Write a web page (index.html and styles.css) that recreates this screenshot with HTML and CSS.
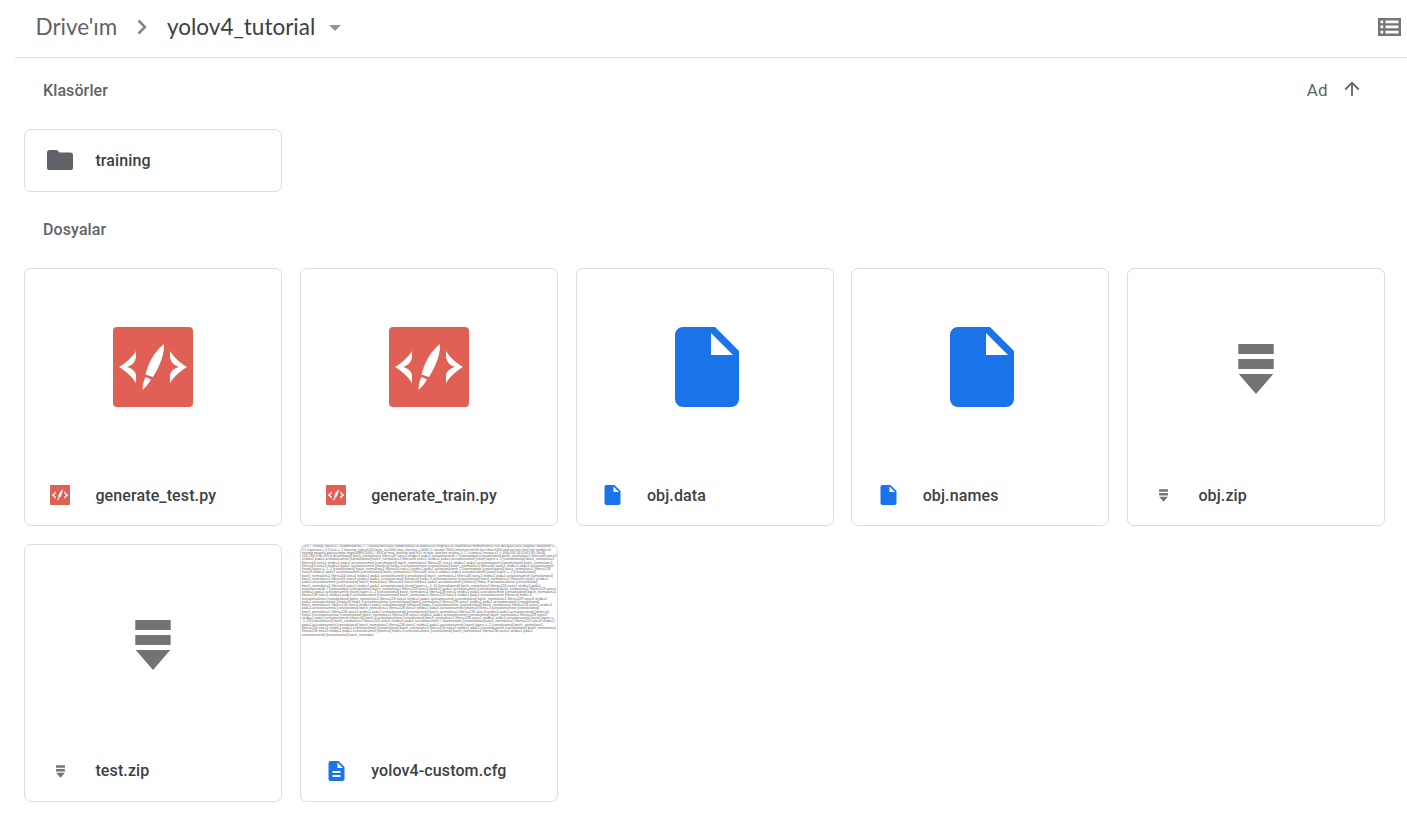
FILE: index.html
```html
<!DOCTYPE html>
<html lang="tr">
<head>
<meta charset="utf-8">
<title>yolov4_tutorial</title>
<link rel="stylesheet" href="styles.css">
</head>
<body>
<svg class="sprite" aria-hidden="true">
  <symbol id="code" viewBox="0 0 80 80">
    <rect width="80" height="80" rx="4" fill="#e06055"/>
    <path fill="#fff" d="M23 24v6c-1 6-4 8-9 10 5 1.500 8 3.500 9 8v8C19 49 11 43 6 40 11 37 19 31 23 24zM57 24v6c1 6 4 8 9 10-5 1.500-8 3.500-9 8v8c4-7 12-13 17-16-5-3-13-9-17-16zM51 17c.5 9-3 20-11 33l-7.500-2.500C35.500 35 42 24 51 17zM32.500 50l5.500 2.500c-2 4-5 7-8.500 10.500 0-5 1-9 3-13z"/>
  </symbol>
  <symbol id="file" viewBox="0 0 64 80">
    <path fill="#1a73e8" fill-rule="evenodd" d="M8 0h32l24 24v48a8 8 0 0 1-8 8H8a8 8 0 0 1-8-8V8a8 8 0 0 1 8-8zM36 6v22h22z"/>
  </symbol>
  <symbol id="doc" viewBox="0 0 64 80">
    <path fill="#1a73e8" fill-rule="evenodd" d="M8 0h32l24 24v48a8 8 0 0 1-8 8H8a8 8 0 0 1-8-8V8a8 8 0 0 1 8-8zM36 6v22h22zM16 40v8h32v-8zM16 56v8h32v-8z"/>
  </symbol>
  <symbol id="zip" viewBox="0 0 36 50">
    <path fill="#737373" d="M.3 0h35.400v10H.3zM.3 15h35.400v10H.3zM.7 30h34.600L18 50z"/>
  </symbol>
</svg>

<header class="topbar">
  <nav class="crumbs">
    <span class="crumb crumb-root">Drive'ım</span>
    <svg class="chevron" viewBox="0 0 10 16"><path d="M1.500 1.500 8 8l-6.500 6.500"/></svg>
    <span class="crumb crumb-current">yolov4_tutorial</span>
    <svg class="caret" viewBox="0 0 12 6"><path d="M0 0h12L6 6z"/></svg>
  </nav>
  <svg class="list-icon" viewBox="0 0 23 18"><path fill-rule="evenodd" d="M0 0h23v18H0zM2.500 2.500v2.700h2.700V2.500zM7.500 2.500v2.700h13V2.500zM2.500 7.600v2.700h2.700V7.600zM7.500 7.600v2.700h13V7.600zM2.500 12.800v2.700h2.700v-2.700zM7.500 12.800v2.700h13v-2.700z"/></svg>
</header>

<main class="content">
  <div class="section-head">
    <h2 class="section-title">Klasörler</h2>
    <div class="sort"><span>Ad</span><svg class="arrow" viewBox="0 0 16 16"><path d="M8 15V2M1.200 8.500 8 1.700l6.800 6.800"/></svg></div>
  </div>
  <div class="grid">
    <div class="card folder">
      <div class="meta"><span class="icon-slot"><svg class="folder-icon" viewBox="0 0 26 20"><path d="M2.600 0H10l2.600 2.500h10.800A2.600 2.600 0 0 1 26 5.100v12.300a2.600 2.600 0 0 1-2.600 2.600H2.600A2.600 2.600 0 0 1 0 17.400V2.600A2.600 2.600 0 0 1 2.600 0z"/></svg></span><span class="name">training</span></div>
    </div>
  </div>

  <h2 class="section-title files-title">Dosyalar</h2>
  <div class="grid">
    <div class="card file">
      <div class="thumb"><svg class="big-code"><use href="#code"/></svg></div>
      <div class="meta"><span class="icon-slot"><svg class="small-code"><use href="#code"/></svg></span><span class="name">generate_test.py</span></div>
    </div>
    <div class="card file">
      <div class="thumb"><svg class="big-code"><use href="#code"/></svg></div>
      <div class="meta"><span class="icon-slot"><svg class="small-code"><use href="#code"/></svg></span><span class="name">generate_train.py</span></div>
    </div>
    <div class="card file">
      <div class="thumb"><svg class="big-file"><use href="#file"/></svg></div>
      <div class="meta"><span class="icon-slot"><svg class="small-file"><use href="#file"/></svg></span><span class="name">obj.data</span></div>
    </div>
    <div class="card file">
      <div class="thumb"><svg class="big-file"><use href="#file"/></svg></div>
      <div class="meta"><span class="icon-slot"><svg class="small-file"><use href="#file"/></svg></span><span class="name">obj.names</span></div>
    </div>
    <div class="card file">
      <div class="thumb"><svg class="big-zip"><use href="#zip"/></svg></div>
      <div class="meta"><span class="icon-slot"><svg class="small-zip"><use href="#zip"/></svg></span><span class="name">obj.zip</span></div>
    </div>
    <div class="card file">
      <div class="thumb"><svg class="big-zip"><use href="#zip"/></svg></div>
      <div class="meta"><span class="icon-slot"><svg class="small-zip"><use href="#zip"/></svg></span><span class="name">test.zip</span></div>
    </div>
    <div class="card file">
      <div class="thumb text-thumb"><p class="preview">[net] # Testing #batch=1 #subdivisions=1 # Training batch=64 subdivisions=16 width=416 height=416 channels=3 momentum=0.949 decay=0.0005 angle=0 saturation = 1.5 exposure = 1.5 hue = .1 learning_rate=0.001 burn_in=1000 max_batches = 6000 (# classes*2000 and must not be less than 6000 and not less than the number of training images) policy=steps steps=4800,5400 # 80% of max_batches and 90% of max_batches scales=.1,.1 #cutmix=1 mosaic=1 #:104x104 54:52x52 85:26x26 104:13x13 for 416 [convolutional] batch_normalize=1 filters=32 size=3 stride=1 pad=1 activation=mish # Downsample [convolutional] batch_normalize=1 filters=64 size=3 stride=2 pad=1 activation=mish [convolutional] batch_normalize=1 filters=64 size=1 stride=1 pad=1 activation=mish [route] layers = -2 [convolutional] batch_normalize=1 filters=64 size=1 stride=1 pad=1 activation=mish [convolutional] batch_normalize=1 filters=32 size=1 stride=1 pad=1 activation=mish [convolutional] batch_normalize=1 filters=64 size=3 stride=1 pad=1 activation=mish [shortcut] from=-3 activation=linear [convolutional] batch_normalize=1 filters=64 size=1 stride=1 pad=1 activation=mish [route] layers = -1,-7 [convolutional] batch_normalize=1 filters=64 size=1 stride=1 pad=1 activation=mish # Downsample [convolutional] batch_normalize=1 filters=128 size=3 stride=2 pad=1 activation=mish [convolutional] batch_normalize=1 filters=64 size=1 stride=1 pad=1 activation=mish [route] layers = -2 [convolutional] batch_normalize=1 filters=64 size=1 stride=1 pad=1 activation=mish [convolutional] batch_normalize=1 filters=64 size=1 stride=1 pad=1 activation=mish [convolutional] batch_normalize=1 filters=64 size=3 stride=1 pad=1 activation=mish [shortcut] from=-3 activation=linear [convolutional] batch_normalize=1 filters=64 size=1 stride=1 pad=1 activation=mish [convolutional] batch_normalize=1 filters=64 size=3 stride=1 pad=1 activation=mish [shortcut] from=-3 activation=linear [convolutional] batch_normalize=1 filters=64 size=1 stride=1 pad=1 activation=mish [route] layers = -1,-10 [convolutional] batch_normalize=1 filters=128 size=1 stride=1 pad=1 activation=mish # Downsample [convolutional] batch_normalize=1 filters=256 size=3 stride=2 pad=1 activation=mish [convolutional] batch_normalize=1 filters=128 size=1 stride=1 pad=1 activation=mish [route] layers = -2 [convolutional] batch_normalize=1 filters=128 size=1 stride=1 pad=1 activation=mish [convolutional] batch_normalize=1 filters=128 size=1 stride=1 pad=1 activation=mish [convolutional] batch_normalize=1 filters=128 size=3 stride=1 pad=1 activation=mish [shortcut] from=-3 activation=linear [convolutional] batch_normalize=1 filters=128 size=1 stride=1 pad=1 activation=mish [convolutional] batch_normalize=1 filters=128 size=3 stride=1 pad=1 activation=mish [shortcut] from=-3 activation=linear [convolutional] batch_normalize=1 filters=128 size=1 stride=1 pad=1 activation=mish [convolutional] batch_normalize=1 filters=128 size=3 stride=1 pad=1 activation=mish [shortcut] from=-3 activation=linear [convolutional] batch_normalize=1 filters=128 size=1 stride=1 pad=1 activation=mish [convolutional] batch_normalize=1 filters=128 size=3 stride=1 pad=1 activation=mish [shortcut] from=-3 activation=linear [convolutional] batch_normalize=1 filters=128 size=1 stride=1 pad=1 activation=mish [convolutional] batch_normalize=1 filters=128 size=3 stride=1 pad=1 activation=mish [shortcut] from=-3 activation=linear [convolutional] batch_normalize=1 filters=128 size=1 stride=1 pad=1 activation=mish [convolutional] batch_normalize=1 filters=128 size=3 stride=1 pad=1 activation=mish [shortcut] from=-3 activation=linear [convolutional] batch_normalize=1 filters=128 size=1 stride=1 pad=1 activation=mish [route] layers = -1,-28 [convolutional] batch_normalize=1 filters=256 size=1 stride=1 pad=1 activation=mish # Downsample [convolutional] batch_normalize=1 filters=512 size=3 stride=2 pad=1 activation=mish [convolutional] batch_normalize=1 filters=256 size=1 stride=1 pad=1 activation=mish [route] layers = -2 [convolutional] batch_normalize=1 filters=256 size=1 stride=1 pad=1 activation=mish [convolutional] batch_normalize=1 filters=256 size=1 stride=1 pad=1 activation=mish [convolutional] batch_normalize=1 filters=256 size=3 stride=1 pad=1 activation=mish [shortcut] from=-3 activation=linear [convolutional] batch_normalize=1 filters=256 size=1 stride=1 pad=1 activation=mish [convolutional] batch_normalize</p></div>
      <div class="meta"><span class="icon-slot"><svg class="small-file"><use href="#doc"/></svg></span><span class="name">yolov4-custom.cfg</span></div>
    </div>
  </div>
</main>
</body>
</html>
```

FILE: styles.css
```css
* { box-sizing: border-box; }
body { margin: 0; background: #fff; color: #3c4043; font-family: Roboto, "Liberation Sans", sans-serif; }
svg { display: block; flex: none; }
.sprite { display: none; }
.topbar { height: 58px; margin-left: 15px; padding: 0 6.5px 3px 20px; border-bottom: 1px solid #dadce0; display: flex; align-items: center; justify-content: space-between; }
.crumbs { display: flex; align-items: center; font: 400 22.5px/30px Lato, sans-serif; }
.crumb { white-space: nowrap; }
.crumb-root { width: 82px; padding-left: .5px; color: #5f6368; }
.crumb-current { width: 149px; margin-left: 20px; color: #3c4043; }
.chevron { width: 10px; height: 16px; margin-left: 20px; fill: none; stroke: #80868b; stroke-width: 2.5; }
.caret { width: 12px; height: 6px; margin: 2px 0 0 13px; fill: #949494; }
.list-icon { width: 23px; height: 18px; fill: #757575; }
.content { padding: 0 22px 0 24px; }
.section-head { height: 71px; padding: 0 25.5px 7px 19px; display: flex; align-items: center; justify-content: space-between; }
.section-title { margin: 0; font-size: 16px; line-height: 20px; font-weight: 500; letter-spacing: .1px; color: #5f6368; }
.section-head .section-title { padding-top: 2px; }
.sort { display: flex; align-items: center; gap: 16px; font-size: 17px; line-height: 20px; color: #5f6368; }
.arrow { width: 16px; height: 16px; margin-bottom: 2px; fill: none; stroke: #5f6368; stroke-width: 1.8; }
.grid { display: grid; grid-template-columns: repeat(5, 258px); justify-content: space-between; row-gap: 17.75px; }
.card { border: 1px solid #dadce0; border-radius: 7px; overflow: hidden; }
.folder { height: 63px; display: flex; align-items: center; }
.file { height: 258px; display: flex; flex-direction: column; }
.files-title { padding: 28px 0 28px 19px; }
.thumb { height: 196px; display: flex; align-items: center; justify-content: center; }
.meta { height: 60px; display: flex; align-items: center; }
.icon-slot { width: 70px; display: flex; justify-content: center; }
.name { padding-left: .4px; font-size: 16px; font-weight: 500; line-height: 22px; letter-spacing: .12px; white-space: nowrap; }
.file .name { padding-top: 1px; }
.folder-icon { width: 26px; height: 20px; margin-bottom: 1px; fill: #5f6368; }
.big-code { width: 80px; height: 80px; }
.small-code { width: 20px; height: 20px; }
.big-file { width: 64px; height: 80px; margin-left: 4px; }
.small-file { width: 17px; height: 20px; margin-left: 2px; }
.big-zip { width: 36px; height: 50px; margin-top: 4px; }
.small-zip { width: 9px; height: 13px; margin-top: 1px; }
.text-thumb { align-items: flex-start; justify-content: flex-start; overflow: hidden; }
.preview { margin: 0; padding: .6px 0 0 1px; font-family: "Liberation Sans", sans-serif; font-size: 3.4px; line-height: 3.27px; color: #666; }
```
